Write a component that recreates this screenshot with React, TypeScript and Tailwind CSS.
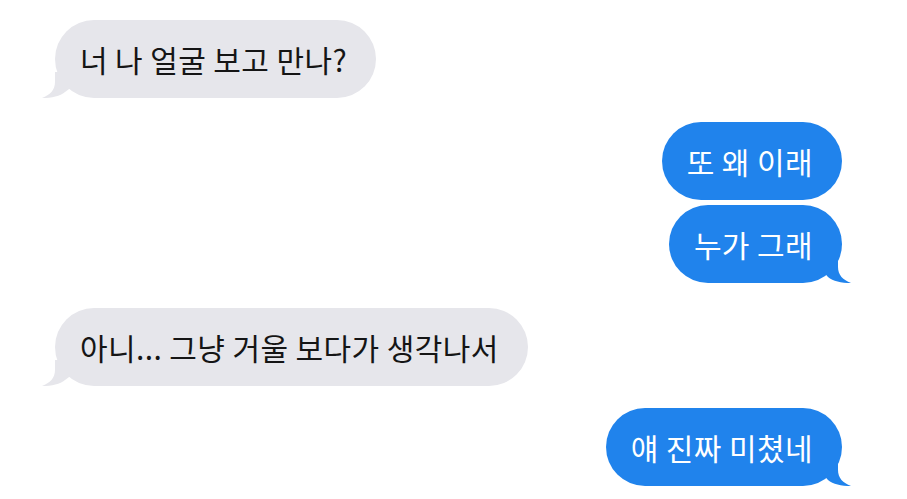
import React from "react"

type Msg = { text: string; me: boolean; tail: boolean; gap: string }

const messages: Msg[] = [
  { text: "너 나 얼굴 보고 만나?", me: false, tail: true, gap: "mt-[20px]" },
  { text: "또 왜 이래", me: true, tail: false, gap: "mt-[24px]" },
  { text: "누가 그래", me: true, tail: true, gap: "mt-[5px]" },
  { text: "아니... 그냥 거울 보다가 생각나서", me: false, tail: true, gap: "mt-[25px]" },
  { text: "얘 진짜 미쳤네", me: true, tail: true, gap: "mt-[22px]" },
]

function Tail({ me }: { me: boolean }) {
  if (me) {
    return (
      <svg
        className="absolute bottom-0 right-[-9px]"
        width="30"
        height="26"
        viewBox="0 0 30 26"
      >
        <path
          d="M17 0 L17 10 C17 18 22 23 30 26 C20 26 12 24 7 20 L0 12 L0 0 Z"
          fill="#2083ec"
        />
      </svg>
    )
  }
  return (
    <svg
      className="absolute bottom-0 left-[-13px]"
      width="34"
      height="26"
      viewBox="0 0 34 26"
    >
      <path
        d="M13 0 L13 10 C13 18 8 23 0 26 C10 26 18 24 23 20 L34 12 L34 0 Z"
        fill="#e6e6eb"
      />
    </svg>
  )
}

function Bubble({ msg }: { msg: Msg }) {
  return (
    <div className={`flex ${msg.me ? "justify-end pr-[65px]" : "justify-start pl-[55px]"} ${msg.gap}`}>
      <div
        className={`relative flex h-[78px] items-center rounded-full pl-[25px] pr-[29px] text-[30px] tracking-[0.4px] ${
          msg.me ? "bg-[#2083ec] text-white" : "bg-[#e6e6eb] text-[#151515]"
        }`}
      >
        {msg.tail && <Tail me={msg.me} />}
        <span className="relative">{msg.text}</span>
      </div>
    </div>
  )
}

export default function App() {
  return (
    <div
      className="h-[499px] w-[907px] overflow-hidden bg-white"
      style={{ fontFamily: '"Noto Sans CJK KR", "Noto Sans", sans-serif' }}
    >
      <div className="flex flex-col">
        {messages.map((m, i) => (
          <Bubble key={i} msg={m} />
        ))}
      </div>
    </div>
  )
}
